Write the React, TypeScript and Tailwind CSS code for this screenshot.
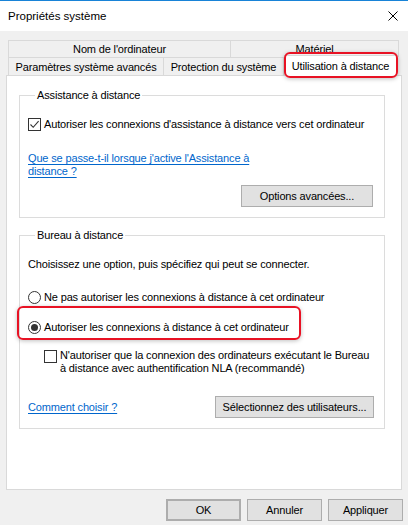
import React from "react";

function Checkbox({ checked }: { checked?: boolean }) {
  return (
    <span className="w-[13px] h-[13px] shrink-0 border border-[#333] bg-white flex items-center justify-center">
      {checked && (
        <svg width="11" height="11" viewBox="0 0 11 11">
          <path d="M1.5 5.5 L4.2 8.3 L9.6 2.2" fill="none" stroke="#333" strokeWidth="1.1" />
        </svg>
      )}
    </span>
  );
}

function Radio({ checked }: { checked?: boolean }) {
  return (
    <span className="w-[13px] h-[13px] shrink-0 rounded-full border border-[#333] bg-white flex items-center justify-center">
      {checked && <span className="w-[7px] h-[7px] rounded-full bg-[#333]" />}
    </span>
  );
}

function Button({ children, className = "" }: { children: React.ReactNode; className?: string }) {
  return (
    <button className={"h-[22px] bg-[#e1e1e1] border border-[#adadad] text-black whitespace-nowrap flex items-center justify-center " + className}>
      {children}
    </button>
  );
}

function Link({ children }: { children: React.ReactNode }) {
  return <span className="text-[#0066cc] underline underline-offset-[2px]">{children}</span>;
}

export default function App() {
  return (
    <div
      className="relative w-[408px] h-[525px] overflow-hidden bg-[#f0f0f0] text-[11px] leading-[16px] tracking-[-0.15px] text-black"
      style={{ fontFamily: '"Liberation Sans", Arial, sans-serif' }}
    >
      <div className="h-px bg-[#1883d7]" />
      {/* title bar */}
      <div className="h-[30px] bg-white flex items-center justify-between pl-[8px] pr-[8px]">
        <span className="text-[11.5px] tracking-normal">Propriétés système</span>
        <svg width="10" height="10" viewBox="0 0 10 10" className="mr-[2px]">
          <path d="M0.5 0.5 L9.5 9.5 M9.5 0.5 L0.5 9.5" stroke="#000" strokeWidth="1" />
        </svg>
      </div>

      {/* tabs */}
      <div className="pt-[9px] pl-[8px] pr-[9px] whitespace-nowrap">
        <div className="flex h-[17px]">
          <div className="w-[223px] border border-b-0 border-[#d9d9d9] flex items-center justify-center">
            Nom de l'ordinateur
          </div>
          <div className="flex-1 border border-b-0 border-l-0 border-[#d9d9d9] flex items-center justify-center">
            Matériel
          </div>
        </div>
        <div className="flex h-[18px] items-end">
          <div className="w-[156px] h-[18px] border border-b-0 border-[#d9d9d9] flex items-center justify-center">
            Paramètres système avancés
          </div>
          <div className="w-[120px] h-[18px] border border-b-0 border-l-0 border-[#d9d9d9] flex items-center justify-center">
            Protection du système
          </div>
          <div className="w-[113px] h-[21px] -mb-px relative z-10 bg-white border border-b-0 border-[#d9d9d9] flex items-center justify-center">
            Utilisation à distance
          </div>
        </div>
      </div>

      {/* panel */}
      <div className="mx-[6px] h-[415px] bg-white border border-[#d9d9d9] pt-[11px] pl-[12px] pr-[16px]">
        <fieldset className="border border-[#dcdcdc] pb-[10px] pl-[8px] pr-[11px]">
          <legend className="ml-[7px] px-[2px]">Assistance à distance</legend>
          <div className="mt-[13px] flex items-center gap-[3px] whitespace-nowrap">
            <Checkbox checked />
            <span>Autoriser les connexions d'assistance à distance vers cet ordinateur</span>
          </div>
          <div className="mt-[20px] leading-[13px]">
            <Link>Que se passe-t-il lorsque j'active l'Assistance à</Link>
            <br />
            <Link>distance ?</Link>
          </div>
          <div className="mt-[7px] flex justify-end">
            <Button className="w-[132px]">Options avancées...</Button>
          </div>
        </fieldset>

        <fieldset className="mt-[9px] border border-[#dcdcdc] pb-[10px] pl-[8px] pr-[10px]">
          <legend className="ml-[7px] px-[2px]">Bureau à distance</legend>
          <div className="mt-[13px] whitespace-nowrap">Choisissez une option, puis spécifiez qui peut se connecter.</div>
          <div className="mt-[17px] flex items-center gap-[3px] whitespace-nowrap">
            <Radio />
            <span>Ne pas autoriser les connexions à distance à cet ordinateur</span>
          </div>
          <div className="mt-[14px] flex items-center gap-[3px] whitespace-nowrap">
            <Radio checked />
            <span>Autoriser les connexions à distance à cet ordinateur</span>
          </div>
          <div className="mt-[14px] pl-[16px] flex items-start gap-[3px]">
            <span className="mt-[1px]">
              <Checkbox />
            </span>
            <span className="leading-[13px] whitespace-nowrap">
              N'autoriser que la connexion des ordinateurs exécutant le Bureau
              <br />à distance avec authentification NLA (recommandé)
            </span>
          </div>
          <div className="mt-[21px] flex items-center justify-between">
            <Link>Comment choisir ?</Link>
            <Button className="w-[159px]">Sélectionnez des utilisateurs...</Button>
          </div>
        </fieldset>
      </div>

      {/* dialog buttons */}
      <div className="mt-[9px] pr-[5px] flex justify-end gap-[6px]">
        <Button className="w-[75px] border-2 border-[#0078d7]">OK</Button>
        <Button className="w-[75px]">Annuler</Button>
        <Button className="w-[75px]">Appliquer</Button>
      </div>

      {/* red highlights */}
      <div className="absolute left-[284px] top-[52px] w-[114px] h-[26px] rounded-[6px] border-2 border-[#e81224] shadow-[0_1px_4px_rgba(0,0,0,0.25)] pointer-events-none z-20" />
      <div className="absolute left-[17px] top-[306px] w-[284px] h-[34px] rounded-[6px] border-2 border-[#e81224] shadow-[0_1px_4px_rgba(0,0,0,0.25)] pointer-events-none z-20" />
    </div>
  );
}
